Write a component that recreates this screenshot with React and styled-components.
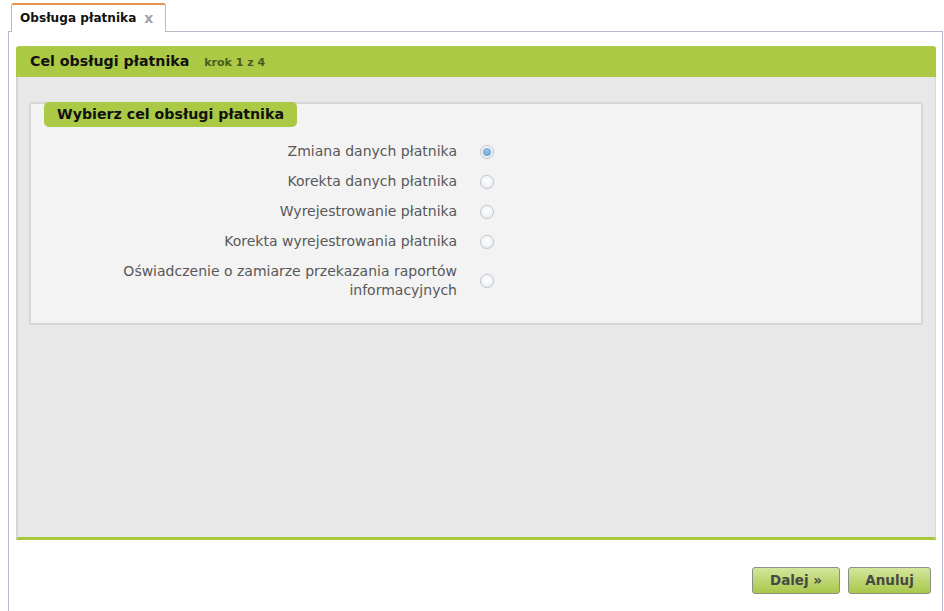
import React from "react";
import styled, { createGlobalStyle } from "styled-components";

const GlobalStyle = createGlobalStyle`
  html, body { margin: 0; padding: 0; background: #ffffff; }
  body { font-family: "DejaVu Sans", Verdana, sans-serif; width: 944px; height: 611px; overflow: hidden; }
  * { box-sizing: border-box; }
`;

const Page = styled.div`
  padding: 3px 0 0 8px;
  height: 611px;
  display: flex;
  flex-direction: column;
`;

const TabBar = styled.div`
  display: flex;
  padding-left: 3px;
  height: 28px;
  position: relative;
  z-index: 1;
`;

const Tab = styled.div`
  display: flex;
  align-items: center;
  gap: 8px;
  width: 155px;
  height: 29px;
  padding: 0 0 2px 8px;
  background: #fff;
  border: 1px solid #b4bccc;
  border-bottom: none;
  border-top: 2px solid #e3924f;
  border-radius: 3px 3px 0 0;
  font-size: 12.1px;
  font-weight: bold;
  color: #111;
`;

const Close = styled.span`
  color: #a0a4aa;
  font-size: 14px;
  font-weight: bold;
  line-height: 1;
`;

const Frame = styled.div`
  flex: 1;
  width: 935px;
  border: 1px solid #b4bccc;
  border-bottom: none;
  padding: 14px 6px 0 7px;
  display: flex;
  flex-direction: column;
`;

const PanelHeader = styled.div`
  height: 31px;
  background: #abc945;
  border-radius: 3px 3px 0 0;
  display: flex;
  align-items: center;
  padding: 0 0 1px 14px;
  gap: 15px;
`;

const PanelTitle = styled.span`
  font-size: 14.2px;
  font-weight: bold;
  color: #111;
`;

const Step = styled.span`
  font-size: 11px;
  font-weight: bold;
  color: #4b5a1c;
  padding-top: 2px;
`;

const PanelBody = styled.div`
  height: 463px;
  background: #e8e8e8;
  border-left: 2px solid #d3d3d3;
  border-right: 1px solid #d8d8d8;
  border-bottom: 3px solid #a8c83e;
  padding: 15px 12px 0 11px;
`;

const Group = styled.div`
  margin-top: 10px;
  height: 223px;
  background: #f3f3f3;
  border: 2px solid #d7d7d7;
  border-radius: 2px;
`;

const Legend = styled.div`
  display: inline-flex;
  align-items: center;
  margin: -12px 0 0 13px;
  height: 25px;
  padding: 0 13px 1px 13px;
  background: #abc945;
  border-radius: 5px;
  font-size: 14.2px;
  font-weight: bold;
  color: #111;
`;

const Options = styled.div`
  display: flex;
  flex-direction: column;
  padding-top: 10px;
`;

const Row = styled.label`
  display: grid;
  grid-template-columns: 426px 14px;
  column-gap: 23px;
  align-items: center;
  padding: 5px 0 6px;
`;

const Label = styled.span`
  text-align: right;
  font-size: 14px;
  line-height: 19px;
  color: #585858;
`;

const Radio = styled.span`
  width: 14px;
  height: 14px;
  border-radius: 50%;
  border: 1px solid #c2c8ce;
  background: radial-gradient(circle at 50% 40%, #ffffff 0%, #f2f4f6 55%, #dde2e6 100%);
  box-shadow: 0 0 0 1px #eceef0;
  display: flex;
  align-items: center;
  justify-content: center;
  &::after {
    content: "";
    width: 8px;
    height: 8px;
    border-radius: 50%;
    background: ${(p) => (p.$checked ? "radial-gradient(circle at 50% 35%, #9cc3e6 0%, #5f97cc 100%)" : "transparent")};
  }
`;

const Actions = styled.div`
  display: flex;
  justify-content: flex-end;
  gap: 8px;
  padding: 27px 5px 0 0;
`;

const Button = styled.button`
  height: 27px;
  width: ${(p) => p.$w}px;
  border: 1px solid #8b8f86;
  border-radius: 3px;
  background: linear-gradient(#d3e69d, #a9c84a);
  font-family: "DejaVu Sans", Verdana, sans-serif;
  font-size: 13.5px;
  font-weight: bold;
  color: #484848;
  padding: 0 0 1px;
`;

const options = [
  { label: "Zmiana danych płatnika", checked: true },
  { label: "Korekta danych płatnika" },
  { label: "Wyrejestrowanie płatnika" },
  { label: "Korekta wyrejestrowania płatnika" },
  { label: "Oświadczenie o zamiarze przekazania raportów informacyjnych", wrap: true },
];

export default function App() {
  return (
    <>
      <GlobalStyle />
      <Page>
        <TabBar>
          <Tab>
            Obsługa płatnika <Close>x</Close>
          </Tab>
        </TabBar>
        <Frame>
          <PanelHeader>
            <PanelTitle>Cel obsługi płatnika</PanelTitle>
            <Step>krok 1 z 4</Step>
          </PanelHeader>
          <PanelBody>
            <Group>
              <Legend>Wybierz cel obsługi płatnika</Legend>
              <Options>
                {options.map((o) => (
                  <Row key={o.label}>
                    <Label>
                      {o.wrap ? (
                        <>
                          Oświadczenie o zamiarze przekazania raportów
                          <br />
                          informacyjnych
                        </>
                      ) : (
                        o.label
                      )}
                    </Label>
                    <Radio $checked={o.checked} />
                  </Row>
                ))}
              </Options>
            </Group>
          </PanelBody>
          <Actions>
            <Button $w={88}>Dalej »</Button>
            <Button $w={83}>Anuluj</Button>
          </Actions>
        </Frame>
      </Page>
    </>
  );
}
